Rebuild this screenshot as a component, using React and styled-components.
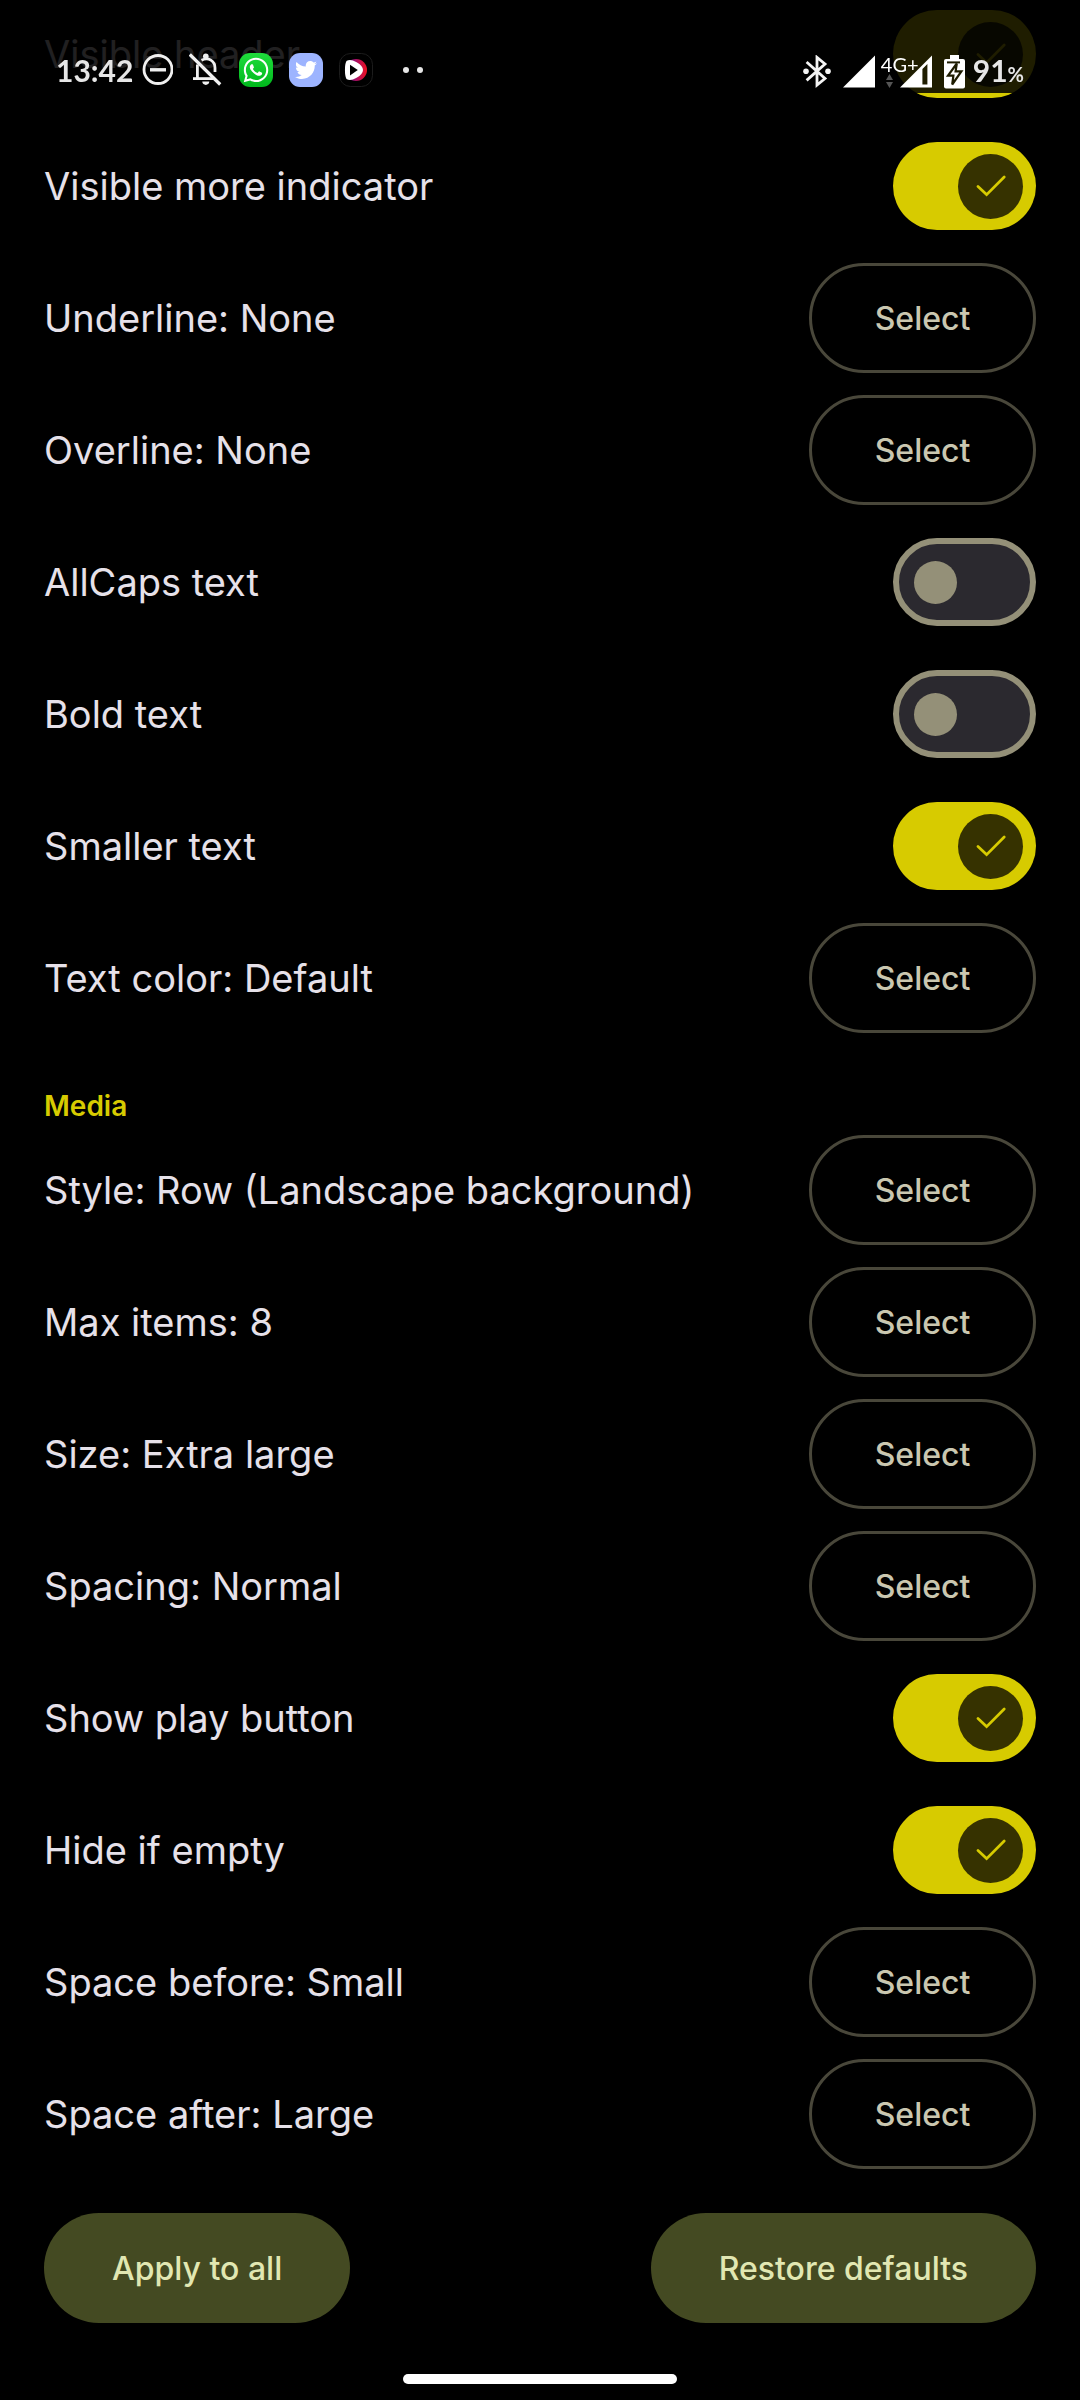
import React, { useState } from 'react';
import styled, { createGlobalStyle } from 'styled-components';
import { FaTwitter, FaWhatsapp } from 'react-icons/fa';

const generalRows = [
    { label: 'Visible header', type: 'switch', on: true },
    { label: 'Visible more indicator', type: 'switch', on: true },
    { label: 'Underline: None', type: 'select' },
    { label: 'Overline: None', type: 'select' },
    { label: 'AllCaps text', type: 'switch', on: false },
    { label: 'Bold text', type: 'switch', on: false },
    { label: 'Smaller text', type: 'switch', on: true },
    { label: 'Text color: Default', type: 'select' },
];

const mediaRows = [
    { label: 'Style: Row (Landscape background)', type: 'select' },
    { label: 'Max items: 8', type: 'select' },
    { label: 'Size: Extra large', type: 'select' },
    { label: 'Spacing: Normal', type: 'select' },
    { label: 'Show play button', type: 'switch', on: true },
    { label: 'Hide if empty', type: 'switch', on: true },
    { label: 'Space before: Small', type: 'select' },
    { label: 'Space after: Large', type: 'select' },
];

const toId = (label) => label.toLowerCase().replace(/[^a-z0-9]+/g, '-');

const DoNotDisturbIcon = () => (
    <svg width="34" height="34" viewBox="0 0 34 34" fill="none" stroke="#f0f0f0">
        <circle cx="19" cy="16.5" r="14" strokeWidth="2.8" />
        <path d="M11 16.8 H27" strokeWidth="3.4" />
    </svg>
);

const BellOffIcon = () => (
    <svg width="34" height="34" viewBox="0 0 34 34" fill="none" stroke="#f0f0f0" strokeWidth="2.8">
        <path d="M0.8 1.5 L31.2 31.5" strokeWidth="3.2" />
        <path d="M12.5 7.2 C19.5 3.6 26 8 26 15 V19" />
        <path d="M8.4 11.5 V25.6" />
        <path d="M4 25.6 H24" />
        <circle cx="16.8" cy="3.2" r="2.8" fill="#f0f0f0" stroke="none" />
        <path d="M13.3 28.6 H20.3 C20.3 33 13.3 33 13.3 28.6 Z" fill="#f0f0f0" stroke="none" />
    </svg>
);

const PlayerIcon = () => (
    <svg width="34" height="34" viewBox="0 0 34 34">
        <defs>
            <linearGradient id="player-ring" x1="0" y1="0" x2="1" y2="0">
                <stop offset="0.3" stopColor="#8a1080" />
                <stop offset="1" stopColor="#f01020" />
            </linearGradient>
        </defs>
        <rect x="0.5" y="0.5" width="33" height="33" rx="11" fill="#000" stroke="#1c1c1c" />
        <circle cx="17" cy="17" r="11" fill="url(#player-ring)" />
        <path d="M9 9.5 C12 7.5 22 13 22 17 C22 21 12 26.5 9 24.5 C7.6 22 7.6 12 9 9.5 Z" fill="#fff" stroke="#fff" strokeWidth="4" strokeLinejoin="round" />
        <path d="M11 11.8 L18.8 17 L11 22.4 Z" fill="#000" />
    </svg>
);

const MoreDotsIcon = () => (
    <svg width="34" height="34" viewBox="0 0 34 34" fill="#e6e6e6">
        <circle cx="17" cy="17" r="3" />
        <circle cx="31" cy="17" r="3" />
    </svg>
);

const BluetoothIcon = () => (
    <svg width="28" height="34" viewBox="0 0 28 34" fill="none" stroke="#f4f4f4" strokeWidth="2.8">
        <path d="M3.6 7 L22 23.5 L14 30 V2.4 L22 9 L3.6 25.4" />
        <circle cx="3" cy="16.3" r="2.8" fill="#f4f4f4" stroke="none" />
        <circle cx="25" cy="16.3" r="2.8" fill="#f4f4f4" stroke="none" />
    </svg>
);

const SignalIcon = ({ weak }) => (
    <svg width="32" height="34" viewBox="0 0 32 34" fill="#fff">
        <path fillRule="evenodd" d={weak ? 'M0 32.5 L32 0.5 V32.5 Z M22.4 14 V29.5 H27.4 V9 Z' : 'M0 32.5 L32 0.5 V32.5 Z'} />
    </svg>
);

const DataArrowsIcon = () => (
    <svg width="13" height="16" viewBox="0 0 13 16" fill="#555">
        <path d="M5 7 L8.5 1 L12 7 Z" />
        <path d="M5 9 L8.5 15 L12 9 Z" />
    </svg>
);

const BatteryIcon = () => (
    <svg width="21" height="34" viewBox="0 0 21 34">
        <rect x="6" y="0" width="9" height="6" fill="#fff" />
        <rect x="0" y="4" width="21" height="29.5" rx="2" fill="#fff" />
        <path d="M3 7.4 H16" stroke="#1e1c00" strokeWidth="2" />
        <path d="M12.8 8.5 L4 20.6 H9.4 L8.2 29.5 L17.4 16.4 H11.6 Z" fill="#fff" stroke="#1e1c00" strokeWidth="2.2" />
    </svg>
);

const StatusBar = () => (
    <StatusBarWrap>
        <StatusGroup>
            <Clock>13:42</Clock>
            <StatusIcons $gap={16}>
                <DoNotDisturbIcon />
                <BellOffIcon />
                <AppBadge $color="linear-gradient(#1fdc3c, #00b81c)"><FaWhatsapp size={28} /></AppBadge>
                <AppBadge $color="#9db4ff"><FaTwitter size={22} /></AppBadge>
                <PlayerIcon />
                <MoreDotsIcon />
            </StatusIcons>
        </StatusGroup>
        <StatusIcons $gap={12}>
            <BluetoothIcon />
            <StatusIcons $gap={6}>
                <SignalIcon />
                <DataColumn>
                    <DataType>4G+</DataType>
                    <DataArrowsIcon />
                </DataColumn>
                <SignalIcon weak />
            </StatusIcons>
            <StatusIcons $gap={8}>
                <BatteryIcon />
                <BatteryLevel>91<Percent>%</Percent></BatteryLevel>
            </StatusIcons>
        </StatusIcons>
    </StatusBarWrap>
);

const SwitchRow = ({ label, on }) => {
    const [checked, setChecked] = useState(on);
    const id = toId(label);

    return (
        <Row>
            <RowLabel htmlFor={id}>{label}</RowLabel>
            <Track $on={checked}>
                <SwitchInput id={id} type="checkbox" checked={checked} onChange={() => setChecked(!checked)} />
                <Thumb $on={checked}>
                    {checked && (
                        <svg width="30" height="22" viewBox="0 0 30 22" fill="none" stroke="#d7cb00" strokeWidth="2.7" strokeLinecap="round">
                            <path d="M2 11.5 L10.6 19.6 L28.2 2" />
                        </svg>
                    )}
                </Thumb>
            </Track>
        </Row>
    );
};

const SelectRow = ({ label }) => {
    const id = toId(label);

    return (
        <Row>
            <RowLabel as="span" id={id}>{label}</RowLabel>
            <SelectButton type="button" aria-describedby={id}>Select</SelectButton>
        </Row>
    );
};

const SettingRow = ({ row }) => (
    row.type === 'switch' ? <SwitchRow label={row.label} on={row.on} /> : <SelectRow label={row.label} />
);

const App = () => (
    <Page>
        <GlobalStyle />
        <StatusBar />
        <Settings>
            {generalRows.map((row) => <SettingRow key={row.label} row={row} />)}
            <SectionTitle>Media</SectionTitle>
            {mediaRows.map((row) => <SettingRow key={row.label} row={row} />)}
        </Settings>
        <Footer>
            <TonalButton type="button">Apply to all</TonalButton>
            <TonalButton type="button">Restore defaults</TonalButton>
        </Footer>
        <NavPill />
    </Page>
);

export default App;

const GlobalStyle = createGlobalStyle`
    * {
        box-sizing: border-box;
    }

    body {
        margin: 0;
        background: #000;
        font-family: Inter, 'Open Sans', sans-serif;
    }

    button {
        font-family: inherit;
    }

    svg {
        display: block;
        flex: none;
    }
`;

const Page = styled.div`
    overflow: hidden;
    color: #e6e1e9;
`;

// stays on top while the settings scroll underneath
const StatusBarWrap = styled.header`
    position: fixed;
    top: 0;
    left: 0;
    right: 0;
    z-index: 1;
    display: flex;
    justify-content: space-between;
    align-items: flex-start;
    height: 93px;
    padding: 52px 56px 0;
    background: rgba(0, 0, 0, 0.86);
    color: #e6e6e6;
    font-family: Lato, 'Open Sans', sans-serif;
`;

const StatusGroup = styled.div`
    display: flex;
    align-items: center;
`;

const StatusIcons = styled.div`
    display: flex;
    align-items: center;
    gap: ${({ $gap }) => $gap}px;
`;

const Clock = styled.time`
    min-width: 83px;
    font-size: 30px;
    line-height: 36px;
    font-weight: 700;
`;

const AppBadge = styled.span`
    display: flex;
    align-items: center;
    justify-content: center;
    width: 34px;
    height: 34px;
    border-radius: 11px;
    background: ${({ $color }) => $color};
    color: #fff;
`;

const DataColumn = styled.div`
    display: flex;
    flex-direction: column;
    width: 13px;
`;

const DataType = styled.span`
    color: #fff;
    font-size: 20px;
    line-height: 18px;
    white-space: nowrap;
`;

const BatteryLevel = styled.span`
    font-size: 30px;
    line-height: 36px;
    font-weight: 700;
`;

const Percent = styled.span`
    font-size: 20px;
`;

const Settings = styled.main`
    margin-top: -12px;
    padding: 0 44px;
`;

const Row = styled.div`
    display: flex;
    align-items: center;
    justify-content: space-between;
    min-height: 132px;
`;

const RowLabel = styled.label`
    font-size: 38px;
    line-height: 52px;
`;

const Track = styled.span`
    display: flex;
    align-items: center;
    justify-content: ${({ $on }) => ($on ? 'flex-end' : 'flex-start')};
    position: relative;
    width: 143px;
    height: 88px;
    padding: 0 ${({ $on }) => ($on ? '13px' : '15px')};
    border: ${({ $on }) => ($on ? 'none' : '6px solid #949078')};
    border-radius: 44px;
    background: ${({ $on }) => ($on ? '#d7cb00' : '#2b292f')};
`;

const SwitchInput = styled.input`
    position: absolute;
    inset: 0;
    width: 100%;
    height: 100%;
    margin: 0;
    opacity: 0;
`;

const Thumb = styled.span`
    display: flex;
    align-items: center;
    justify-content: center;
    width: ${({ $on }) => ($on ? '65px' : '43px')};
    height: ${({ $on }) => ($on ? '65px' : '43px')};
    border-radius: 50%;
    background: ${({ $on }) => ($on ? '#363200' : '#949078')};
`;

const SelectButton = styled.button`
    min-width: 227px;
    height: 110px;
    border: 3px solid #49473a;
    border-radius: 55px;
    background: transparent;
    color: #cac7b0;
    font-size: 32px;
    font-weight: 500;
`;

const SectionTitle = styled.h2`
    display: flex;
    align-items: center;
    min-height: 80px;
    margin: 0;
    padding-top: 44px;
    color: #d7cb00;
    font-size: 28px;
    line-height: 36px;
    font-weight: 600;
`;

const Footer = styled.footer`
    display: flex;
    justify-content: space-between;
    padding: 33px 44px 51px;
`;

const TonalButton = styled.button`
    height: 110px;
    padding: 0 68px;
    border: none;
    border-radius: 55px;
    background: #444a22;
    color: #e1e7b2;
    font-size: 32px;
    font-weight: 500;
`;

const NavPill = styled.div`
    width: 274px;
    height: 10px;
    margin: 0 auto 16px;
    border-radius: 5px;
    background: #fff;
`;
